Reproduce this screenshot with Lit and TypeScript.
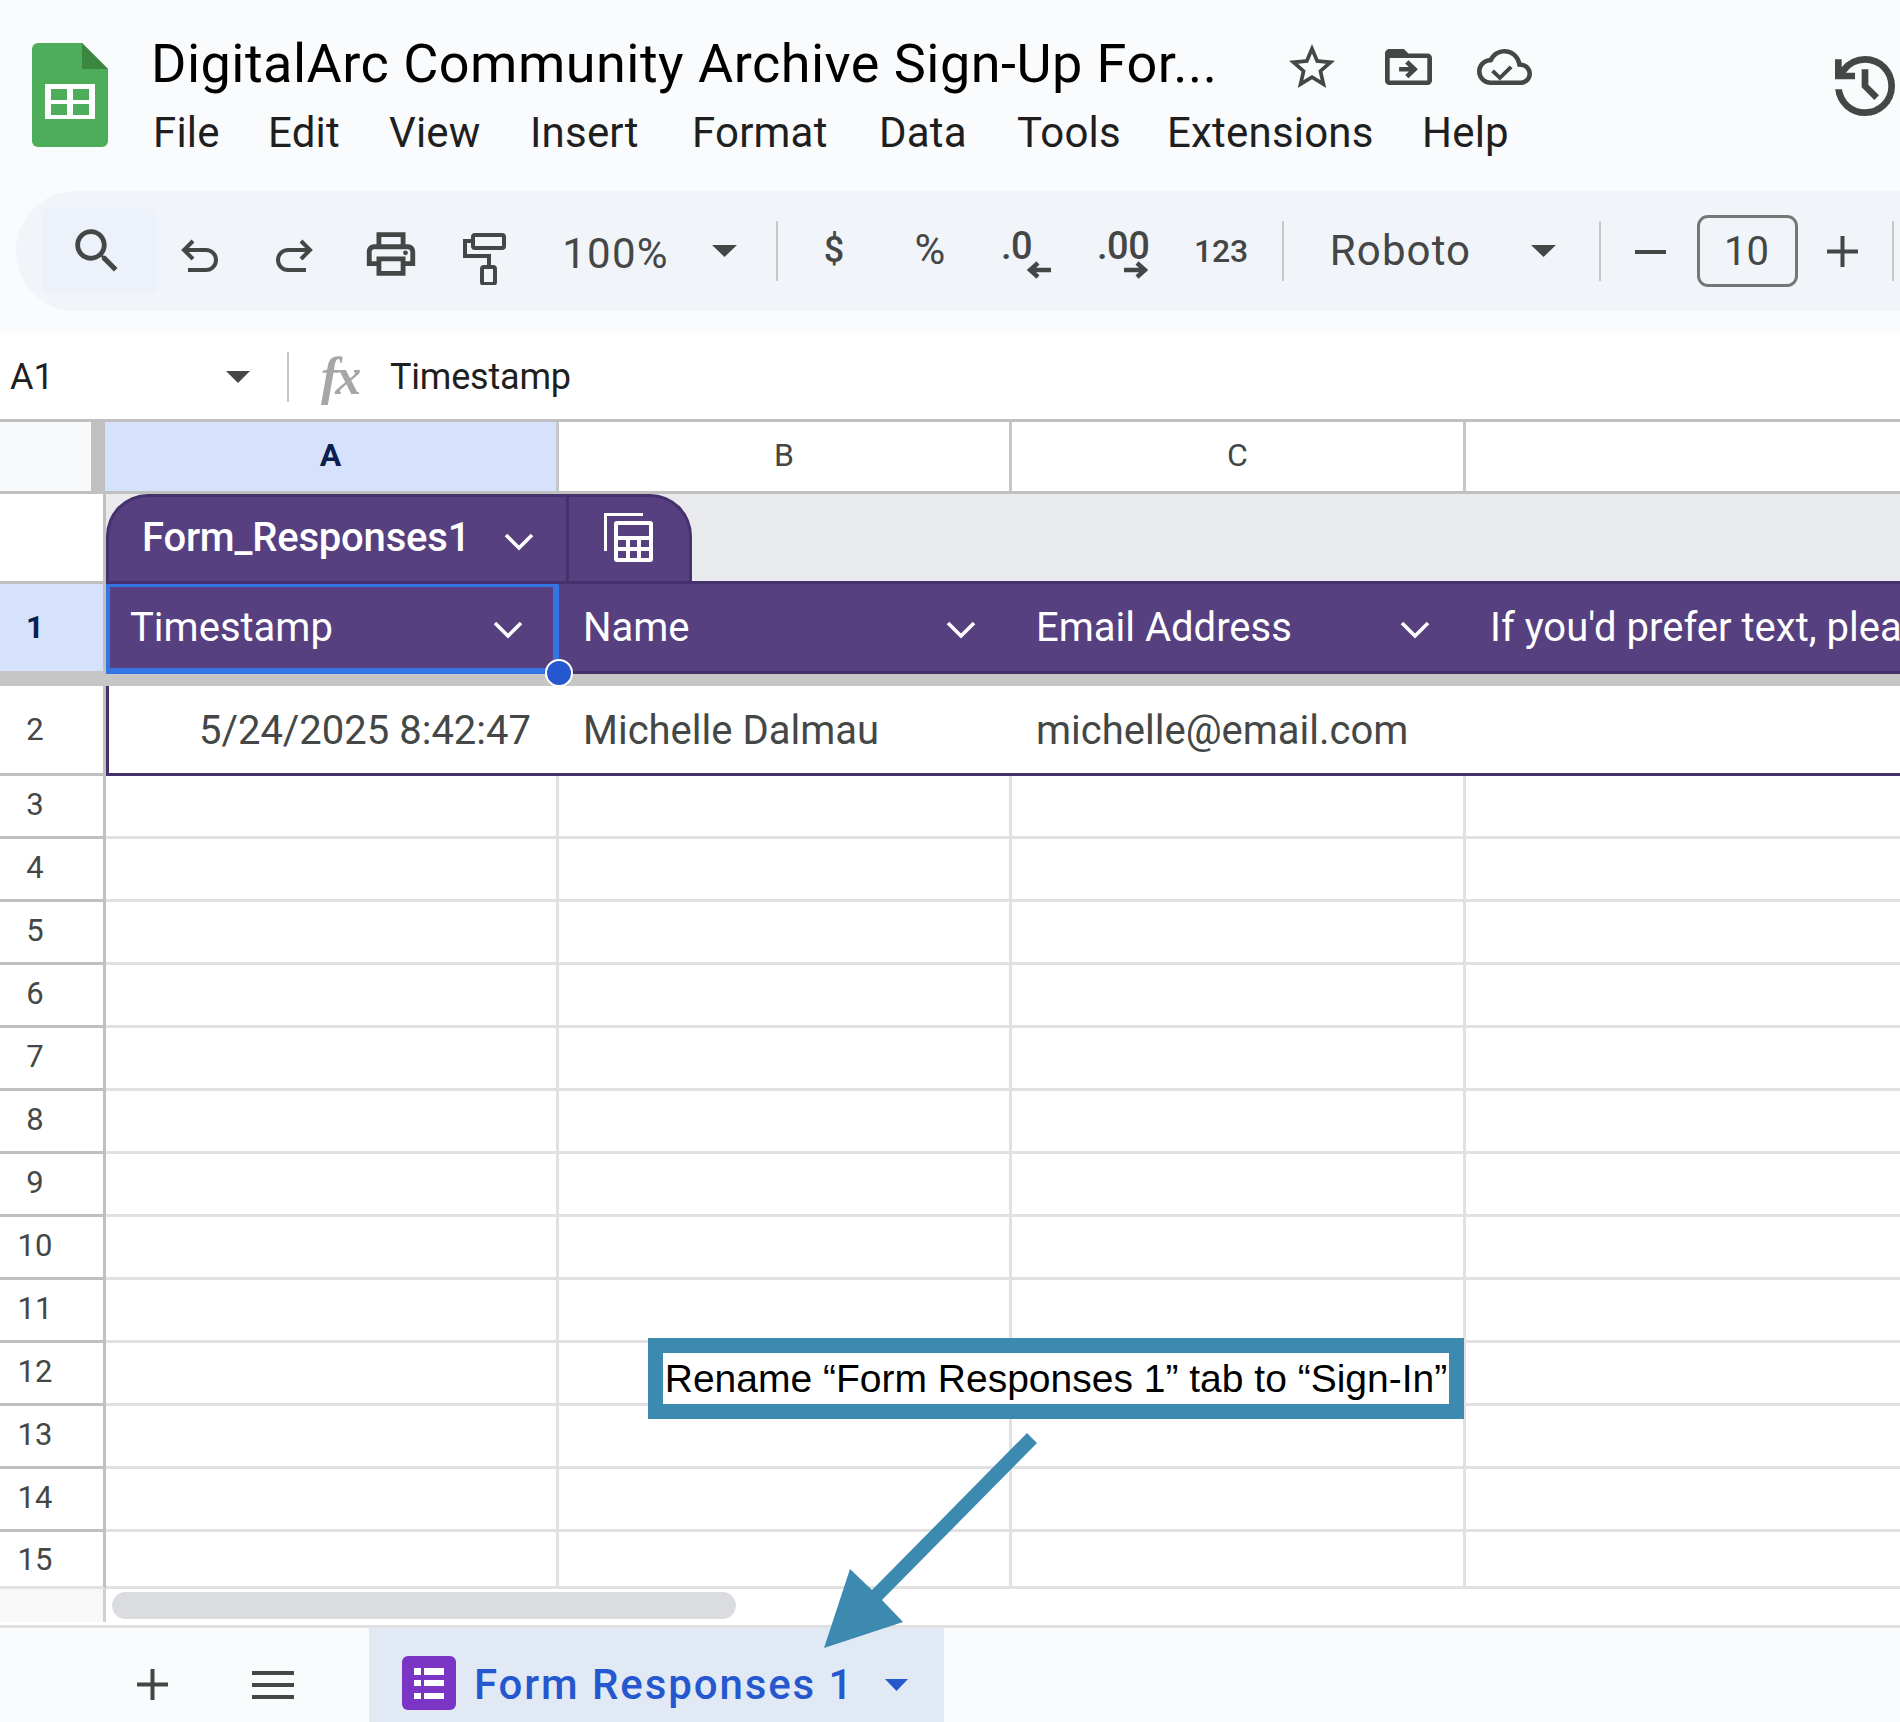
import { LitElement, html, css } from "lit";
import { customElement } from "lit/decorators.js";

const tri = () => html`<svg class="tri" viewBox="0 0 26 13" preserveAspectRatio="none"><path d="M0 0h26L13 13z"/></svg>`;
const chev = () => html`<svg class="chev" viewBox="0 0 30 18"><path d="M2 2l13 13L28 2" fill="none" stroke="#fff" stroke-width="3.6"/></svg>`;

const rows = [3,4,5,6,7,8,9,10,11,12,13,14,15];

@customElement("app-root")
export class AppRoot extends LitElement {
  static styles = css`
    :host { display:block; width:1900px; height:1722px; position:relative; overflow:hidden; background:#fff; font-family:Roboto,"Liberation Sans",sans-serif; color:#444746; }
    svg { display:block; fill:#444746; }
    .chev { width:30px; height:18px; flex:none; }
    .header { height:335px; box-sizing:border-box; background:#f9fbfd; position:relative; }
    .top { display:flex; height:191px; box-sizing:border-box; padding:43px 0 0 32px; }
    .logo { width:76px; height:104px; flex:none; margin-right:44px; }
    .main { flex:1; min-width:0; }
    .titlerow { display:flex; height:67px; }
    .title { width:1137px; font-size:54px; line-height:42px; color:#000; flex:none; white-space:nowrap; letter-spacing:.48px; margin-left:-1px; margin-right:1px; }
    .star { width:46px; height:44px; margin-top:1px; flex:none; }
    .folder { width:47px; height:36px; margin:6px 0 0 50px; flex:none; }
    .cloud { width:55px; height:36px; margin:6px 0 0 45px; flex:none; }
    .hist { width:60px; height:60px; margin:13px 0 0 303px; flex:none; }
    .menu { display:grid; grid-template-columns:115px 121px 141px 162px 187px 138px 150px 255px auto; font-size:42px; line-height:46px; color:#1f1f1f; padding-left:1px; letter-spacing:.2px; }
    .toolbar { position:absolute; left:16px; right:0; top:191px; height:120px; background:#f1f4f9; border-radius:60px 0 0 60px; display:grid; grid-template-columns:115px 84px 108px 84px 102px 161px 56px 50px 64px 128px 64px 130px 66px 58px 177px 108px 6px 94px 101px 88px 14px; padding-left:26px; box-sizing:border-box; align-items:center; justify-items:center; }
    .tsearch { width:115px; height:84px; background:#edf2fa; border-radius:4px; display:flex; align-items:center; justify-content:center; margin-top:-1px; }
    .tsearch svg { width:58px; height:58px; margin:0 0 0 -6px; }
    .undo { width:38px; height:34px; margin-top:10px; }
    .print { width:58px; height:58px; margin-top:6px; }
    .roller { width:44px; height:52px; margin-top:15px; }
    .tt { font-size:39px; line-height:1; color:#444746; white-space:nowrap; }
    .t100 { margin-top:5px; font-size:42px; letter-spacing:1.2px; }
    .tri { width:25px; height:12px; }
    .sep { width:2px; height:60px; background:#c7c7c7; margin-top:0; }
    .t34 { font-size:36px; font-weight:500; margin-top:-2px; }
    .t42 { font-size:42px; font-weight:400; margin-top:-2px; }
    .dec { position:relative; width:64px; height:60px; }
    .dec span { position:absolute; top:2px; font-size:38px; font-weight:500; line-height:46px; letter-spacing:-.5px; color:#444746; }
    .dec svg { position:absolute; top:40px; width:25px; height:18px; }
    .dec .d1 { left:7px; }
    .dec .d1a { left:33px; }
    .dec .d2 { left:6px; }
    .dec .d2a { left:32px; }
    .t123 { font-size:32px; font-weight:500; margin-top:-1px; letter-spacing:-.2px; }
    .font { font-size:42px; letter-spacing:1.1px; margin-top:0; }
    .minus { width:31px; height:4px; background:#444746; margin-top:2px; }
    .size { box-sizing:border-box; width:101px; height:72px; border:3px solid #747775; border-radius:11px; display:flex; align-items:center; justify-content:center; font-size:40px; color:#444746; margin-top:0; padding-right:2px; }
    .plus { width:31px; height:31px; position:relative; margin-top:0; }
    .plus svg { width:31px; height:31px; }

    .fbar { height:84px; display:flex; align-items:center; }
    .a1 { width:226px; padding-left:10px; box-sizing:border-box; font-size:36px; color:#1f1f1f; }
    .fbar .tri { width:24px; height:12px; margin-right:37px; }
    .fsep { width:2px; height:50px; background:#c7c7c7; margin-right:32px; }
    .fx { font-family:"Liberation Serif",serif; font-style:italic; font-weight:700; font-size:52px; color:#a6a6a6; width:69px; letter-spacing:-3px; line-height:1; margin-top:0; }
    .ftext { font-size:36px; color:#1f1f1f; letter-spacing:-.2px; }

    .row { display:grid; grid-template-columns:106px 453px 453px 454px 1fr; }
    .ch { box-sizing:border-box; height:75px; border-top:3px solid #c0c0c0; border-bottom:3px solid #c0c0c0; }
    .ch > div { display:flex; align-items:center; justify-content:center; font-size:32px; color:#444746; box-sizing:border-box; border-right:3px solid #c7c7c7; padding-bottom:4px; }
    .ch > div:last-child { border-right:none; }
    .ch .corner { background:#f8f9fa; border-right:14px solid #c0c0c0; width:105px; }
    .ch .cola { background:#d6e2fb; font-weight:700; color:#0b1f51; margin-left:-1px; }
    .gut { display:flex; align-items:center; justify-content:center; box-sizing:border-box; border-right:3px solid #c0c0c0; border-bottom:3px solid #c0c0c0; font-size:31px; color:#444746; padding:0 33px 4px 0; width:106px; }
    .tabrow { height:90px; }
    .tabrow .gut { padding:0; }
    .tabfill { grid-column:2 / 6; background:#e8eaed; display:flex; box-shadow:inset 0 -3px #45316b; }
    .ttab { width:586px; height:87px; box-sizing:border-box; background:#57407f; border:3px solid #45316b; border-bottom:none; border-radius:42px 42px 0 0; display:flex; color:#fff; }
    .ttab .l { width:460px; box-sizing:border-box; border-right:3px solid #45316b; padding:0 32px 4px 33px; display:flex; align-items:center; justify-content:space-between; font-size:40px; font-weight:500; letter-spacing:-.2px; white-space:nowrap; }
    .ttab .chev { margin-top:10px; }
    .ttab .r { flex:1; display:flex; align-items:center; justify-content:center; padding-bottom:3px; }
    .calc { width:50px; height:50px; fill:#fff; margin-left:-1px; }
    .hrow { height:90px; }
    .hrow .gut { background:#d6e2fb; font-weight:700; color:#0b1f51; border-bottom:3px solid #c6c6c6; padding-bottom:1px; }
    .hc { position:relative; background:#57407f; box-shadow:inset 0 -3px #45316b; color:#fff; font-size:40px; display:flex; align-items:center; justify-content:space-between; padding:0 36px 4px 24px; white-space:nowrap; overflow:hidden; }
    .hc .chev { margin-top:6px; }
    .hc.a { overflow:visible; }
    .sel { position:absolute; inset:0; border-style:solid; border-color:#3574e3; border-width:3px 6px 6px 4px; }
    .handle { position:absolute; right:-14px; bottom:-13px; width:24px; height:24px; box-sizing:content-box; background:#2558cf; border:2px solid #fff; border-radius:50%; z-index:2; }
    .freeze { height:12px; background:#c6c6c6; }
    .drow { height:90px; }
    .drow .gut { padding-bottom:1px; }
    .dc { box-sizing:border-box; border-bottom:3px solid #45316b; font-size:40px; color:#444746; display:flex; align-items:center; padding:1px 25px 0 24px; white-space:nowrap; }
    .dc.a { justify-content:flex-end; border-left:3px solid #45316b; padding-right:28px; }
    .erow { height:63px; }
    .ec { box-sizing:border-box; border-right:3px solid #e1e1e1; border-bottom:3px solid #e1e1e1; }
    .ec:last-child { border-right:none; }
    .erow.last { height:57px; }
    .erow.last .gut { border-bottom-color:#e1e1e1; padding-bottom:0; }
    .scroll { height:39px; box-sizing:border-box; border-bottom:3px solid #e1e1e1; display:flex; }
    .sgut { width:106px; height:33px; background:#f8f8f8; border-right:3px solid #d0d0d0; box-sizing:border-box; }
    .thumb { margin:3px 0 0 6px; width:624px; height:27px; border-radius:14px; background:#dadce0; }
    .bottom { height:94px; background:#f9fbfd; display:flex; }
    .add { width:31px; height:31px; margin:41px 0 0 137px; }
    .burger { width:42px; height:28px; margin:43px 0 0 84px; flex:none; }
    .stab { margin-left:75px; width:575px; background:#e1e9f5; display:flex; align-items:flex-start; color:#2558cf; }
    .ficon { width:54px; height:54px; margin:28px 0 0 33px; flex:none; }
    .sname { margin:34px 0 0 18px; font-size:42px; font-weight:500; line-height:46px; letter-spacing:1.9px; white-space:nowrap; width:411px; flex:none; }
    .stab .tri { margin-top:51px; width:23px; height:12px; fill:#2558cf; }
    .note { position:absolute; left:648px; top:1338px; width:816px; height:81px; box-sizing:border-box; border:15px solid #3d8ab0; background:#fff; display:flex; align-items:center; justify-content:center; font-family:"Liberation Sans",sans-serif; font-size:39px; color:#000; white-space:nowrap; }
    .arrow { position:absolute; left:0; top:0; width:1900px; height:1722px; pointer-events:none; }
  `;

  render() {
    const cells = html`<div class="ec"></div><div class="ec"></div><div class="ec"></div><div class="ec"></div>`;
    return html`
      <div class="header">
        <div class="top">
          <svg class="logo" viewBox="0 0 76 104">
            <path d="M6 0h44l26 26v72a6 6 0 0 1-6 6H6a6 6 0 0 1-6-6V6a6 6 0 0 1 6-6z" fill="#4ead5b"/>
            <path d="M50 0l26 26H50z" fill="#3b873f"/>
            <path d="M13 41h50v35H13z" fill="#fff"/>
            <path d="M19 46h16v11H19zM41 46h16v11H41zM19 61h16v11H19zM41 61h16v11H41z" fill="#4ead5b"/>
          </svg>
          <div class="main">
            <div class="titlerow">
              <div class="title">DigitalArc Community Archive Sign-Up For...</div>
              <svg class="star" viewBox="2 2 20 19" preserveAspectRatio="none"><path d="M22 9.24l-7.19-.62L12 2 9.19 8.63 2 9.24l5.46 4.73L5.82 21 12 17.27 18.18 21l-1.63-7.03L22 9.24zM12 15.4l-3.76 2.27 1-4.28-3.32-2.88 4.38-.38L12 6.1l1.71 4.04 4.38.38-3.32 2.88 1 4.28L12 15.4z"/></svg>
              <svg class="folder" viewBox="2 4 20 16" preserveAspectRatio="none"><path d="M20 6h-8l-2-2H4c-1.1 0-2 .9-2 2v12c0 1.1.9 2 2 2h16c1.1 0 2-.9 2-2V8c0-1.1-.9-2-2-2zm0 12H4V8h16v10z"/><path d="M12.16 12H8v2h4.16l-1.59 1.59L12 17l4-4-4-4-1.43 1.41z"/></svg>
              <svg class="cloud" viewBox="0 4 24 16" preserveAspectRatio="none"><path d="M19.35 10.04C18.67 6.59 15.64 4 12 4 9.11 4 6.6 5.64 5.35 8.04 2.34 8.36 0 10.91 0 14c0 3.31 2.69 6 6 6h13c2.76 0 5-2.24 5-5 0-2.64-2.05-4.78-4.65-4.96zM19 18H6c-2.21 0-4-1.79-4-4 0-2.05 1.53-3.76 3.56-3.97l1.07-.11.5-.95C8.08 7.14 9.94 6 12 6c2.62 0 4.88 1.86 5.39 4.43l.3 1.5 1.53.11c1.56.1 2.78 1.41 2.78 2.96 0 1.65-1.35 3-3 3zm-9-2.3l-2.6-2.6-1.2 1.2L10 18l5.5-5.5-1.2-1.2z"/></svg>
              <svg class="hist" viewBox="120 -840 720 720"><path d="M480-120q-138 0-240.5-91.5T122-440h82q14 104 92.5 172T480-200q117 0 198.5-81.5T760-480q0-117-81.5-198.5T480-760q-69 0-129 32t-101 88h110v80H120v-240h80v94q51-64 124.5-99T480-840q150 0 255 105t105 255q0 150-105 255T480-120Zm112-192L440-464v-216h80v184l128 128-56 56Z"/></svg>
            </div>
            <div class="menu">
              <span>File</span><span>Edit</span><span>View</span><span>Insert</span><span>Format</span><span>Data</span><span>Tools</span><span>Extensions</span><span>Help</span>
            </div>
          </div>
        </div>
        <div class="toolbar">
          <div class="tsearch"><svg viewBox="0 0 24 24"><path d="M15.5 14h-.79l-.28-.27C15.41 12.59 16 11.11 16 9.5 16 5.91 13.09 3 9.5 3S3 5.91 3 9.5 5.91 16 9.5 16c1.61 0 3.09-.59 4.23-1.57l.27.28v.79l5 4.99L20.49 19l-4.99-5zm-6 0C7.01 14 5 11.99 5 9.5S7.01 5 9.5 5 14 7.01 14 9.5 11.99 14 9.5 14z"/></svg></div>
          <svg class="undo" viewBox="0 0 38 34"><path d="M13 2L4 11l9 9M4 11h22a8.5 8.5 0 0 1 0 20H8" fill="none" stroke="#444746" stroke-width="4"/></svg>
          <svg class="undo" viewBox="0 0 38 34"><path d="M25 2l9 9-9 9M34 11H12a8.5 8.5 0 0 0 0 20h18" fill="none" stroke="#444746" stroke-width="4"/></svg>
          <svg class="print" viewBox="0 0 24 24"><path d="M19 8h-1V3H6v5H5c-1.66 0-3 1.34-3 3v6h4v4h12v-4h4v-6c0-1.66-1.34-3-3-3zM8 5h8v3H8V5zm8 12v2H8v-4h8v2zm2-2v-2H6v2H4v-4c0-.55.45-1 1-1h14c.55 0 1 .45 1 1v4h-2z"/><circle cx="18" cy="11.5" r="1"/></svg>
          <svg class="roller" viewBox="0 0 44 52"><g fill="none" stroke="#444746" stroke-width="4"><rect x="11" y="2" width="31" height="13" rx="2"/><path d="M11 8H3v15h24v10"/><rect x="20" y="34" width="13" height="17" rx="2"/></g></svg>
          <div class="tt t100">100%</div>
          ${tri()}
          <div class="sep"></div>
          <div class="tt t34">$</div>
          <div class="tt t42">%</div>
          <div class="dec"><span class="d1">.0</span><svg class="d1a" viewBox="0 0 25 18"><path d="M24 9H4M11 2L3 9l8 7" fill="none" stroke="#444746" stroke-width="4.5"/></svg></div>
          <div class="dec"><span class="d2">.00</span><svg class="d2a" viewBox="0 0 25 18"><path d="M1 9h20M14 2l8 7-8 7" fill="none" stroke="#444746" stroke-width="4.5"/></svg></div>
          <div class="tt t123">123</div>
          <div class="sep"></div>
          <div class="tt font">Roboto</div>
          ${tri()}
          <div class="sep"></div>
          <div class="minus"></div>
          <div class="size">10</div>
          <div class="plus"><svg viewBox="0 0 31 31"><path d="M0 13.5h31v4H0zM13.5 0h4v31h-4z"/></svg></div>
          <div class="sep"></div>
        </div>
      </div>
      <div class="fbar">
        <div class="a1">A1</div>${tri()}
        <div class="fsep"></div>
        <div class="fx">fx</div>
        <div class="ftext">Timestamp</div>
      </div>
      <div class="row ch">
        <div class="corner"></div><div class="cola">A</div><div>B</div><div>C</div><div></div>
      </div>
      <div class="row tabrow">
        <div class="gut"></div>
        <div class="tabfill">
          <div class="ttab">
            <div class="l"><span>Form_Responses1</span>${chev()}</div>
            <div class="r"><svg class="calc" viewBox="0 0 50 50">
              <path d="M1.5 38V1.5H39" fill="none" stroke="#fff" stroke-width="3"/>
              <rect x="10" y="8" width="39" height="41" rx="3"/>
              <path d="M14 12h31v11H14zM14 27h8v7h-8zM26 27h7v7h-7zM37 27h8v7h-8zM14 38h8v7h-8zM26 38h7v7h-7zM37 38h8v7h-8z" fill="#57407f"/>
            </svg></div>
          </div>
        </div>
      </div>
      <div class="row hrow">
        <div class="gut">1</div>
        <div class="hc a"><span>Timestamp</span>${chev()}<div class="sel"></div><div class="handle"></div></div>
        <div class="hc"><span>Name</span>${chev()}</div>
        <div class="hc"><span>Email Address</span>${chev()}</div>
        <div class="hc"><span>If you'd prefer text, plea</span></div>
      </div>
      <div class="freeze"></div>
      <div class="row drow">
        <div class="gut">2</div>
        <div class="dc a">5/24/2025 8:42:47</div>
        <div class="dc">Michelle Dalmau</div>
        <div class="dc">michelle@email.com</div>
        <div class="dc"></div>
      </div>
      ${rows.map(n => html`<div class="row erow ${n === 15 ? "last" : ""}"><div class="gut">${n}</div>${cells}</div>`)}
      <div class="scroll"><div class="sgut"></div><div class="thumb"></div></div>
      <div class="bottom">
        <svg class="add" viewBox="0 0 31 31"><path d="M0 13.5h31v4H0zM13.5 0h4v31h-4z"/></svg>
        <svg class="burger" viewBox="0 0 42 28"><path d="M0 0h42v4H0zM0 12h42v4H0zM0 24h42v4H0z"/></svg>
        <div class="stab">
          <svg class="ficon" viewBox="0 0 54 54">
            <rect width="54" height="54" rx="6" fill="#7b35c5"/>
            <path d="M12 12h7v7h-7zM22 12h20v7H22zM12 24h7v6h-7zM22 24h20v6H22zM12 37h7v6h-7zM22 37h20v6H22z" fill="#fff"/>
          </svg>
          <div class="sname">Form Responses 1</div>
          ${tri()}
        </div>
      </div>
      <div class="note">Rename “Form Responses 1” tab to “Sign-In”</div>
      <svg class="arrow" viewBox="0 0 1900 1722"><path d="M1027 1433L1037 1443 882 1600 903 1622 824 1648 850 1569 872 1590z" fill="#3d8ab0"/></svg>
    `;
  }
}
